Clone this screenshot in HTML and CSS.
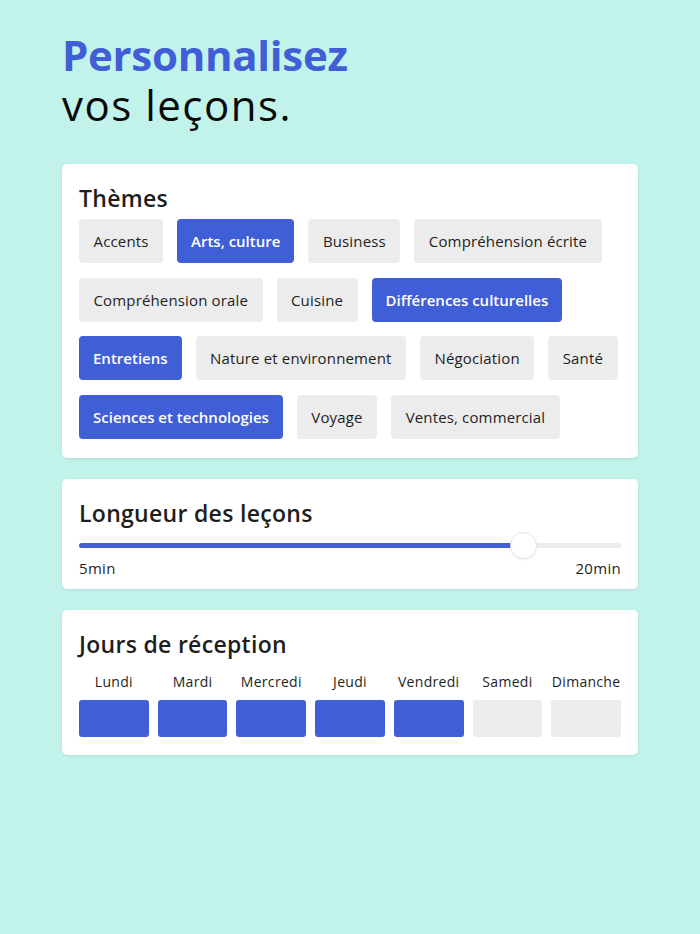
FILE: index.html
```html
<!DOCTYPE html>
<html lang="fr">
<head>
<meta charset="utf-8">
<title>Personnalisez vos leçons</title>
<link rel="stylesheet" href="styles.css">
</head>
<body>
<main class="page">
  <h1 class="title"><span class="title-accent">Personnalisez</span><span class="title-rest">vos leçons.</span></h1>

  <section class="card card-themes">
    <h2 class="card-title">Thèmes</h2>
    <div class="chips">
      <span class="chip">Accents</span>
      <span class="chip chip-on">Arts, culture</span>
      <span class="chip">Business</span>
      <span class="chip">Compréhension écrite</span>
      <span class="chip">Compréhension orale</span>
      <span class="chip">Cuisine</span>
      <span class="chip chip-on">Différences culturelles</span>
      <span class="chip chip-on">Entretiens</span>
      <span class="chip">Nature et environnement</span>
      <span class="chip">Négociation</span>
      <span class="chip">Santé</span>
      <span class="chip chip-on">Sciences et technologies</span>
      <span class="chip">Voyage</span>
      <span class="chip">Ventes, commercial</span>
    </div>
  </section>

  <section class="card card-length">
    <h2 class="card-title">Longueur des leçons</h2>
    <div class="slider">
      <div class="slider-track">
        <div class="slider-fill" style="width: 82%"></div>
      </div>
      <div class="slider-thumb" style="left: 82%"></div>
    </div>
    <div class="slider-labels">
      <span>5min</span>
      <span>20min</span>
    </div>
  </section>

  <section class="card card-days">
    <h2 class="card-title">Jours de réception</h2>
    <div class="days">
      <div class="day"><span class="day-name">Lundi</span><span class="day-box day-on"></span></div>
      <div class="day"><span class="day-name">Mardi</span><span class="day-box day-on"></span></div>
      <div class="day"><span class="day-name">Mercredi</span><span class="day-box day-on"></span></div>
      <div class="day"><span class="day-name">Jeudi</span><span class="day-box day-on"></span></div>
      <div class="day"><span class="day-name">Vendredi</span><span class="day-box day-on"></span></div>
      <div class="day"><span class="day-name">Samedi</span><span class="day-box"></span></div>
      <div class="day"><span class="day-name">Dimanche</span><span class="day-box"></span></div>
    </div>
  </section>
</main>
</body>
</html>
```

FILE: styles.css
```css
* { box-sizing: border-box; }

html, body {
  margin: 0;
  padding: 0;
}

body {
  background: #c2f3eb;
  font-family: "Open Sans", "Noto Sans", sans-serif;
  color: #1e1e1e;
  width: 700px;
  min-height: 934px;
}

.page {
  padding: 30px 62px 0 62px;
}

.title {
  margin: 0 0 34px 0;
  font-size: 42px;
  line-height: 50px;
}

.title-accent {
  display: block;
  color: #405ed6;
  font-weight: 700;
  letter-spacing: -0.3px;
}

.title-rest {
  display: block;
  color: #0a0a0a;
  font-weight: 500;
  letter-spacing: 1.5px;
}

.card {
  background: #ffffff;
  border-radius: 5px;
  box-shadow: 0 1px 3px rgba(0, 0, 0, 0.10);
  padding: 18px 17px 19px 17px;
  margin-bottom: 21px;
}

.card-title {
  margin: 0;
  font-size: 23px;
  line-height: 32px;
  font-weight: 600;
  color: #1e1e1e;
  letter-spacing: 0.3px;
}

.card-themes .card-title {
  margin-bottom: 5px;
}

.chips {
  display: flex;
  flex-wrap: wrap;
  column-gap: 14px;
  row-gap: 14.5px;
}

.chip {
  display: flex;
  align-items: center;
  height: 44px;
  padding: 0 14.5px;
  background: #ececec;
  border-radius: 4px;
  font-size: 15px;
  letter-spacing: 0.15px;
  color: #1e1e1e;
  white-space: nowrap;
}

.chip-on {
  background: #405ed6;
  color: #ffffff;
  font-weight: 600;
  letter-spacing: 0;
  padding: 0 14px;
}

.card-length {
  padding-bottom: 11px;
}

.slider {
  position: relative;
  height: 28px;
  margin-top: 3px;
  display: flex;
  align-items: center;
}

.slider-track {
  width: 100%;
  height: 5px;
  background: #ececec;
  border-radius: 3px;
  overflow: hidden;
}

.slider-fill {
  height: 100%;
  background: #405ed6;
}

.slider-thumb {
  position: absolute;
  top: 0;
  width: 27px;
  height: 27px;
  margin-left: -13px;
  border-radius: 50%;
  background: #ffffff;
  border: 1px solid #e6e6e6;
  box-shadow: 0 1px 2px rgba(0, 0, 0, 0.08);
}

.slider-labels {
  display: flex;
  justify-content: space-between;
  font-size: 15px;
  line-height: 20px;
  margin-top: -2px;
  letter-spacing: 0.3px;
}

.card-days {
  padding-bottom: 18px;
}

.card-days .card-title {
  margin-bottom: 12px;
}

.days {
  display: grid;
  grid-template-columns: repeat(7, 1fr);
  gap: 9px;
}

.day {
  display: flex;
  flex-direction: column;
  align-items: center;
  gap: 8px;
}

.day-name {
  font-size: 14px;
  line-height: 20px;
  letter-spacing: 0.3px;
  color: #1e1e1e;
  white-space: nowrap;
}

.day-box {
  width: 100%;
  height: 37px;
  border-radius: 3px;
  background: #ececec;
}

.day-on {
  background: #405ed6;
}
```
